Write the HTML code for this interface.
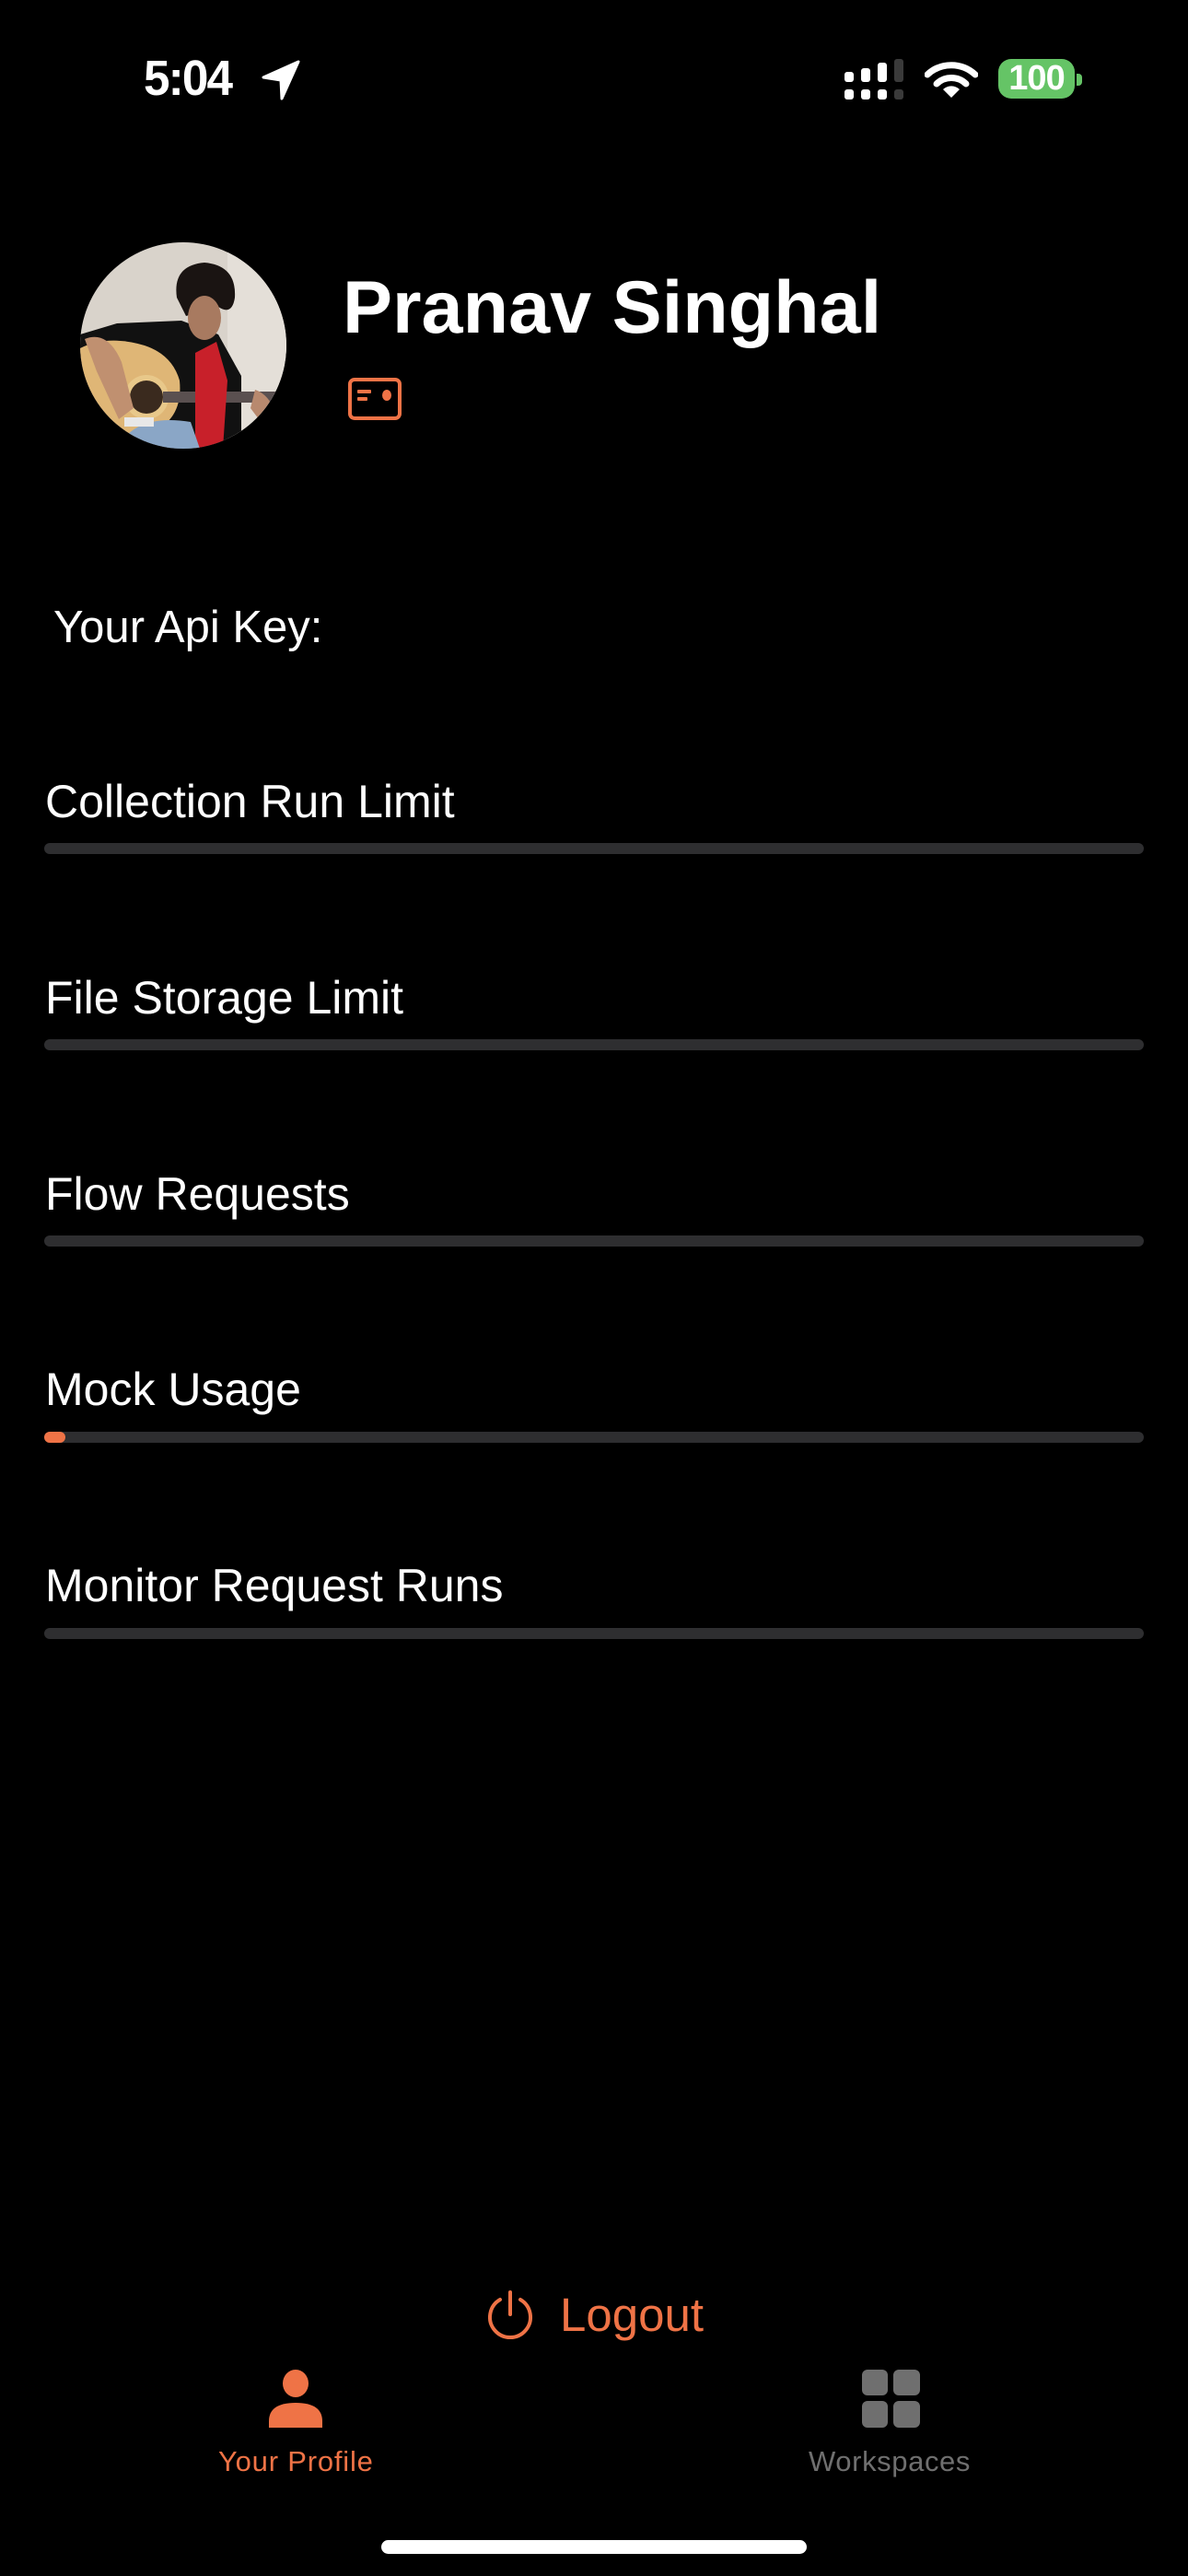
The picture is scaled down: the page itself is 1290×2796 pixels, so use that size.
<!DOCTYPE html>
<html><head><meta charset="utf-8">
<style>
html,body{margin:0;padding:0;background:#000;}
body{width:1290px;height:2796px;position:relative;overflow:hidden;font-family:"Liberation Sans",Arial,sans-serif;color:#fff;}
.abs{position:absolute;}
.lbl{position:absolute;left:49px;font-size:50px;line-height:1;white-space:nowrap;}
.bar{position:absolute;left:48px;width:1194px;height:12px;border-radius:6px;background:#2e2e30;}
</style></head><body>

<div class="abs" style="left:156px;top:58px;font-size:54px;font-weight:bold;letter-spacing:-2px;line-height:1;transform:scaleX(0.95);transform-origin:left;">5:04</div>
<svg class="abs" style="left:282px;top:64px" width="46" height="46" viewBox="0 0 46 46"><path d="M42 3 L4 20 L23 23 L24 43 Z" fill="#fff" stroke="#fff" stroke-width="3" stroke-linejoin="round"/></svg>

<svg class="abs" style="left:910px;top:60px" width="80" height="52" viewBox="910 60 80 52">
<rect x="917" y="78" width="10" height="11" rx="3" fill="#fff"/>
<rect x="917" y="97" width="10" height="11" rx="3" fill="#fff"/>
<rect x="935" y="74" width="10" height="15" rx="3" fill="#fff"/>
<rect x="935" y="97" width="10" height="11" rx="3" fill="#fff"/>
<rect x="953" y="68" width="10" height="21" rx="3" fill="#fff"/>
<rect x="953" y="97" width="10" height="11" rx="3" fill="#fff"/>
<rect x="971" y="64" width="10" height="25" rx="3" fill="#3a3a3a"/>
<rect x="971" y="97" width="10" height="11" rx="3" fill="#3a3a3a"/>
</svg>
<svg class="abs" style="left:1004px;top:64px" width="58" height="43" viewBox="0 0 58 43">
<path d="M3 17 A38 38 0 0 1 55 17" fill="none" stroke="#fff" stroke-width="7" stroke-linecap="round"/>
<path d="M13 27 A23 23 0 0 1 45 27" fill="none" stroke="#fff" stroke-width="7" stroke-linecap="round"/>
<path d="M20 33 L29 42 L38 33 A13 13 0 0 0 20 33 Z" fill="#fff"/>
</svg>
<div class="abs" style="left:1084px;top:64px;width:83px;height:43px;border-radius:14px;background:#65c466;color:#fff;font-weight:bold;font-size:38px;line-height:43px;text-align:center;letter-spacing:-1px;">100</div>
<div class="abs" style="left:1169px;top:80px;width:6px;height:13px;border-radius:0 4px 4px 0;background:#65c466;"></div>

<svg class="abs" style="left:87px;top:263px" width="224" height="224" viewBox="0 0 224 224">
<defs><clipPath id="c"><circle cx="112" cy="112" r="112"/></clipPath></defs>
<g clip-path="url(#c)">
<rect width="224" height="224" fill="#d9d3cb"/>
<rect x="160" y="0" width="64" height="224" fill="#e4dfd8"/>
<path d="M0 100 L40 88 L110 85 L150 100 L175 145 L175 224 L0 224 Z" fill="#111"/>
<path d="M105 60 Q100 25 135 22 Q170 25 168 60 Q165 80 150 70 L115 80 Z" fill="#1a1412"/>
<ellipse cx="135" cy="82" rx="18" ry="24" fill="#a87a60"/>
<path d="M0 115 Q30 100 70 112 Q100 122 108 150 Q112 190 80 205 Q40 220 0 205 Z" fill="#dfb676"/>
<circle cx="72" cy="168" r="24" fill="#e8c88a"/>
<circle cx="72" cy="168" r="18" fill="#3a2a1e"/>
<rect x="90" y="162" width="134" height="12" fill="#5a5050"/>
<path d="M125 120 L148 108 L160 150 L155 224 L125 224 Z" fill="#c8202a"/>
<path d="M5 105 Q30 95 45 130 L58 180 L42 192 L18 140 Z" fill="#c09070"/>
<path d="M190 160 Q205 165 212 185 L200 200 L185 180 Z" fill="#b8896e"/>
<path d="M40 224 Q60 185 120 195 L130 224 Z" fill="#8aa6c6"/>
<rect x="48" y="190" width="32" height="10" fill="#e8e8e8"/>
</g></svg>

<div class="abs" style="left:372px;top:294px;font-size:81px;font-weight:bold;line-height:1;white-space:nowrap;">Pranav Singhal</div>
<svg class="abs" style="left:378px;top:410px" width="58" height="46" viewBox="0 0 58 46">
<rect x="2" y="2" width="54" height="42" rx="5" fill="none" stroke="#ef7346" stroke-width="4"/>
<rect x="10" y="13" width="15" height="4" rx="1" fill="#ef7346"/>
<rect x="10" y="21" width="11" height="4" rx="1" fill="#ef7346"/>
<ellipse cx="42" cy="19" rx="5" ry="6" fill="#ef7346"/>
</svg>

<div class="lbl" style="left:58px;top:657px;font-size:49px;">Your Api Key:</div>

<div class="lbl" style="top:845px;">Collection Run Limit</div>
<div class="bar" style="top:915px;"></div>
<div class="lbl" style="top:1058px;">File Storage Limit</div>
<div class="bar" style="top:1128px;"></div>
<div class="lbl" style="top:1271px;">Flow Requests</div>
<div class="bar" style="top:1341px;"></div>
<div class="lbl" style="top:1483px;">Mock Usage</div>
<div class="bar" style="top:1554px;"><div style="width:23px;height:12px;border-radius:6px;background:#ef7346;"></div></div>
<div class="lbl" style="top:1696px;">Monitor Request Runs</div>
<div class="bar" style="top:1767px;"></div>

<svg class="abs" style="left:525px;top:2484px" width="58" height="58" viewBox="0 0 58 58">
<path d="M18 12 A22 22 0 1 0 40 12" fill="none" stroke="#ef7346" stroke-width="4" stroke-linecap="round"/>
<line x1="29" y1="4" x2="29" y2="28" stroke="#ef7346" stroke-width="4" stroke-linecap="round"/>
</svg>
<div class="abs" style="left:608px;top:2487px;font-size:51px;color:#ef7346;line-height:1;">Logout</div>

<svg class="abs" style="left:292px;top:2572px" width="58" height="63" viewBox="0 0 58 63">
<ellipse cx="29" cy="15" rx="14" ry="15" fill="#ef7346"/>
<path d="M0 63 L0 56 Q0 36 29 36 Q58 36 58 56 L58 63 Z" fill="#ef7346"/>
</svg>
<div class="abs" style="left:237px;top:2656px;font-size:31px;color:#ef7346;line-height:1;white-space:nowrap;letter-spacing:0.8px;">Your Profile</div>
<svg class="abs" style="left:936px;top:2572px" width="63" height="63" viewBox="0 0 63 63">
<rect x="0" y="0" width="28" height="28" rx="6" fill="#6f6f6f"/>
<rect x="34" y="0" width="29" height="28" rx="6" fill="#6f6f6f"/>
<rect x="0" y="34" width="28" height="29" rx="6" fill="#6f6f6f"/>
<rect x="34" y="34" width="29" height="29" rx="6" fill="#6f6f6f"/>
</svg>
<div class="abs" style="left:878px;top:2656px;font-size:31px;color:#6f6f6f;line-height:1;white-space:nowrap;letter-spacing:0.6px;">Workspaces</div>

<div class="abs" style="left:414px;top:2757px;width:462px;height:15px;border-radius:8px;background:#fff;"></div>
</body></html>
